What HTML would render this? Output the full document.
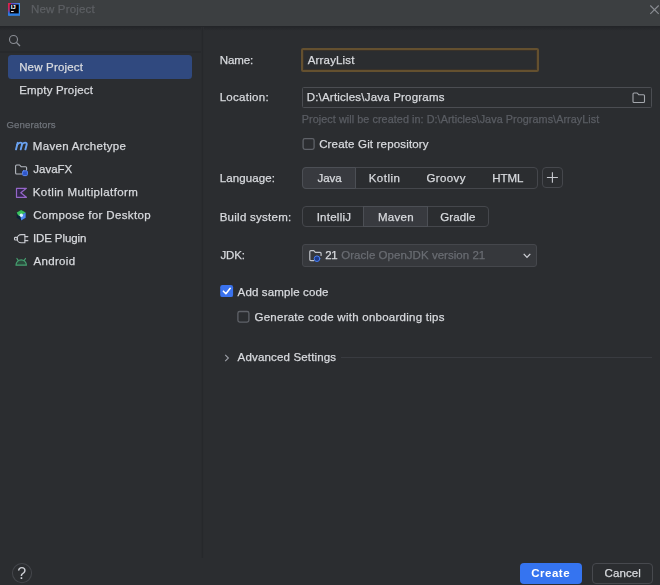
<!DOCTYPE html>
<html><head><meta charset="utf-8">
<style>
*{box-sizing:border-box;margin:0;padding:0}
html,body{width:660px;height:585px;overflow:hidden;background:#2b2d30;font-family:"Liberation Sans",sans-serif;font-size:12px;color:#dfe1e5}
.abs{position:absolute}
.t{position:absolute;white-space:pre;line-height:16px;-webkit-text-stroke:0.25px}
#title{left:0;top:0;width:660px;height:26px;background:#3c3f41}
.cb{position:absolute;width:12px;height:12px;border:1px solid #6a6d74;border-radius:2px;background:#2b2d30}
.seg{position:absolute;border:1px solid #45474c;border-radius:4px}
.sel{position:absolute;background:#383a3f;border:1px solid #4c4f55;border-radius:4px 0 0 4px}
</style></head><body>
<div id="title" class="abs">
  <svg class="abs" style="left:8px;top:3px" width="12.4" height="12.6" viewBox="0 0 12.2 12.8" preserveAspectRatio="none">
    <defs><linearGradient id="g1" x1="0" y1="0" x2="0" y2="1"><stop offset="0" stop-color="#e8203c"/><stop offset="0.5" stop-color="#c02a70"/><stop offset="0.8" stop-color="#2a6fe0"/><stop offset="1" stop-color="#2a7de8"/></linearGradient>
    <linearGradient id="g2" x1="0" y1="0" x2="1" y2="0"><stop offset="0" stop-color="#7a2bb0"/><stop offset="1" stop-color="#3a8ff0"/></linearGradient></defs>
    <rect width="12.2" height="12.8" rx="0.8" fill="#3a9cf2"/>
    <rect width="12.2" height="2" rx="0.8" fill="url(#g2)"/>
    <rect width="3" height="12.8" rx="0.8" fill="url(#g1)"/>
    <rect x="0" y="10.4" width="12.2" height="2.4" rx="0.8" fill="#2a7de8"/>
    <rect x="1.8" y="1.5" width="8.8" height="9.1" fill="#050208"/>
    <rect x="3" y="8.2" width="2.6" height="0.9" fill="#fff"/>
    <text x="2.7" y="6.6" font-family="Liberation Sans, sans-serif" font-weight="bold" font-size="6.2" fill="#fff" letter-spacing="-0.2">IJ</text>
  </svg>
  <svg class="abs" style="left:0;top:0" width="660" height="26" viewBox="0 0 660 26"><path d="M650.3 5.5L658.7 13.9M658.7 5.5L650.3 13.9" stroke="#8a8d93" stroke-width="1.1" fill="none"/></svg>
</div>
<div class="abs" style="left:0;top:26px;width:660px;height:5px;background:linear-gradient(#222427,#26282b 40%,#2b2d30)"></div>
<div class="abs" style="left:0;top:51px;width:201px;height:2px;background:#27292c"></div>
<div class="abs" style="left:201px;top:27px;width:1px;height:531px;background:#292b2e"></div><div class="abs" style="left:202px;top:27px;width:1px;height:531px;background:#26282b"></div><div class="abs" style="left:203px;top:27px;width:1px;height:531px;background:#2a2c2f"></div>

<!-- search -->
<svg class="abs" style="left:8px;top:33.5px" width="14" height="14" viewBox="0 0 14 14"><circle cx="5.5" cy="5.5" r="4" stroke="#8a8d94" stroke-width="1.1" fill="none"/><path d="M8.5 8.5L12 12" stroke="#8a8d94" stroke-width="1.2"/></svg>

<div class="abs" style="left:7.5px;top:55px;width:184.5px;height:23.5px;background:#30497f;border-radius:3.5px"></div>

<!-- form shapes -->
<div class="abs" style="left:301px;top:48px;width:237.5px;height:24px;border:2px solid #64502f;border-radius:2px;box-shadow:inset 0 0 0 1px #3a3229"></div>
<div class="abs" style="left:302px;top:87px;width:350px;height:21px;border:1px solid #4b4d52;border-radius:1.5px"></div>


<div class="seg" style="left:302px;top:167px;width:236px;height:22px"></div>
<div class="sel" style="left:302px;top:167px;width:54px;height:22px"></div>
<div class="seg" style="left:542px;top:167px;width:21px;height:21px"></div>
<svg class="abs" style="left:546px;top:171px" width="13" height="13" viewBox="0 0 13 13"><path d="M6.4 1.2v10.6M0.9 6.5h11" stroke="#c8cad0" stroke-width="1.1"/></svg>

<div class="seg" style="left:302px;top:206px;width:187px;height:21px"></div>
<div class="sel" style="left:363px;top:206px;width:65px;height:21px;border-radius:0"></div>

<div class="abs" style="left:302px;top:244px;width:235px;height:23px;border:1px solid #45474c;border-radius:3px;background:#36383c"></div>
<svg class="abs" style="left:523px;top:253px" width="8" height="6" viewBox="0 0 8 6"><path d="M0.7 0.8L4 4.3L7.3 0.8" stroke="#ced0d6" stroke-width="1.2" fill="none"/></svg>


<svg class="abs" style="left:224px;top:354px" width="6" height="8" viewBox="0 0 6 8"><path d="M1.2 0.8L4.4 4L1.2 7.2" stroke="#9da0a8" stroke-width="1.1" fill="none"/></svg>
<div class="abs" style="left:341px;top:357px;width:311px;height:1px;background:#393b40"></div>

<!-- bottom -->
<div class="abs" style="left:520px;top:563px;width:61.5px;height:21px;background:#3574f0;border-radius:4px"></div>
<div class="abs" style="left:591.5px;top:563px;width:61.5px;height:21px;border:1px solid #47494e;border-radius:4px"></div>

<!-- icons -->
<svg class="abs" style="left:0;top:0" width="660" height="585" viewBox="0 0 660 585" fill="none" stroke-linecap="round" stroke-linejoin="round">
  <!-- maven m -->
  <g stroke="#6aa2f0" stroke-width="1.9">
    <path d="M16 149.4L17.7 142.8"/>
    <path d="M17.3 144.6C18.6 142.2 22.6 141.8 22 144.6L20.7 149.4"/>
    <path d="M21.9 144.6C23.2 142.2 27.4 141.8 26.7 144.6L25.4 149.4"/>
  </g>
  <!-- javafx folder -->
  <path d="M21.6 174H16.6a1 1 0 0 1-1-1V166a1 1 0 0 1 1-1h3l1.5 1.7h4.5a1 1 0 0 1 1 1v2.4" stroke="#b4b8bf" stroke-width="1.1"/>
  <rect x="22.6" y="170.8" width="4.8" height="4.8" rx="1" fill="#2f55c8" stroke="#5a88f2" stroke-width="1"/>
  <!-- kotlin -->
  <path d="M16.5 188.3H26.4L20.8 192.8L26.4 197.3H16.5Z" fill="#30254a" stroke="#9566c8" stroke-width="1.2"/>
  <!-- compose -->
  <g stroke="none">
    <path d="M21.2 210L25.7 212.6V217.8L21.2 220.4L16.7 217.8V212.6Z" fill="#0b2238"/>
    <path d="M16.7 212.6L21.2 210L25.7 212.6L21.2 215.2L18.2 215.4Z" fill="#3ac35c"/>
    <path d="M25.7 212.6V217.8L21.2 220.4L20.6 217.2L22.6 214.2Z" fill="#4f86ee"/>
    <circle cx="21.3" cy="215.2" r="1.7" fill="#d8f4ff"/>
  </g>
  <!-- plugin -->
  <g stroke="#c8cad0" stroke-width="1.1">
    <path d="M24.9 234.6H21.2a4.1 4.1 0 0 0 0 8.2H24.9Z"/>
    <rect x="14.5" y="237.4" width="3" height="2.6" rx="0.8"/>
    <path d="M25 236.6H27.8M25 240.7H27.8" stroke-width="1.3"/>
  </g>
  <!-- android -->
  <g stroke="#46a070" stroke-width="1.2">
    <path d="M16 265.2a5.2 5.4 0 0 1 10.4 0Z" fill="#2a4a3c"/>
    <path d="M18.2 260.4L16.9 258.5M24.2 260.4L25.5 258.5"/>
  </g>
  <circle cx="22" cy="573.1" r="9.6" stroke="#43454a" stroke-width="1.1"/>
  <!-- checkboxes -->
  <rect x="303.1" y="138.7" width="11" height="10.6" rx="1.8" stroke="#5f6268" stroke-width="1.3"/>
  <rect x="237.9" y="311.5" width="11" height="10.6" rx="1.8" stroke="#5f6268" stroke-width="1.3"/>
  <rect x="220.2" y="285.1" width="12.9" height="12" rx="2.2" fill="#3a72ee" stroke="none"/>
  <path d="M223.4 291.2L225.9 293.7L230.2 288.3" stroke="#fff" stroke-width="1.6"/>
  <!-- location folder -->
  <path d="M633 94a1 1 0 0 1 1-1h3.2l1.5 1.7h4.8a1 1 0 0 1 1 1v5.8a1 1 0 0 1-1 1h-9.5a1 1 0 0 1-1-1Z" stroke="#a4a7ad" stroke-width="1.1"/>
  <!-- jdk folder -->
  <path d="M314 260.6H310.8a1 1 0 0 1-1-1V251.7a1 1 0 0 1 1-1h3l1.5 1.7h4.8a1 1 0 0 1 1 1v2" stroke="#c0c3c9" stroke-width="1.2"/>
  <circle cx="317" cy="258.7" r="2.8" fill="#1d3a8a" stroke="#4a80f0" stroke-width="1"/>
</svg>
<div class="abs" style="left:0;top:0;width:660px;height:585px;will-change:transform">
<div class="t" id="ttl" style="left:31.03px;top:1.28px;font-size:11.5px;letter-spacing:0.160px;color:#5c5f63;">New Project</div>
<div class="t" id="np" style="left:19.15px;top:58.98px;font-size:11.5px;letter-spacing:0.175px;color:#d8dade;">New Project</div>
<div class="t" id="ep" style="left:19.15px;top:82.28px;font-size:11.5px;letter-spacing:0.181px;color:#d8dade;">Empty Project</div>
<div class="t" id="gen" style="left:6.45px;top:117.14px;font-size:9.6px;letter-spacing:0.131px;color:#6f737a;">Generators</div>
<div class="t" id="i1" style="left:32.83px;top:138.47px;font-size:11.5px;letter-spacing:0.299px;color:#d8dade;">Maven Archetype</div>
<div class="t" id="i2" style="left:33.31px;top:161.47px;font-size:11.5px;letter-spacing:-0.005px;color:#d8dade;">JavaFX</div>
<div class="t" id="i3" style="left:32.83px;top:184.47px;font-size:11.5px;letter-spacing:0.376px;color:#d8dade;">Kotlin Multiplatform</div>
<div class="t" id="i4" style="left:33.13px;top:207.47px;font-size:11.5px;letter-spacing:0.346px;color:#d8dade;">Compose for Desktop</div>
<div class="t" id="i5" style="left:32.95px;top:230.47px;font-size:11.5px;letter-spacing:-0.108px;color:#d8dade;">IDE Plugin</div>
<div class="t" id="i6" style="left:33.48px;top:253.47px;font-size:11.5px;letter-spacing:0.330px;color:#d8dade;">Android</div>
<div class="t" id="l1" style="left:219.83px;top:51.73px;font-size:11.5px;letter-spacing:-0.107px;color:#d8dade;">Name:</div>
<div class="t" id="v1" style="left:307.81px;top:51.73px;font-size:11.5px;letter-spacing:0.152px;color:#d8dade;">ArrayList</div>
<div class="t" id="l2" style="left:219.69px;top:89.22px;font-size:11.5px;letter-spacing:0.283px;color:#d8dade;">Location:</div>
<div class="t" id="v2" style="left:306.69px;top:89.22px;font-size:11.5px;letter-spacing:0.203px;color:#d8dade;">D:\Articles\Java Programs</div>
<div class="t" id="hint" style="left:301.85px;top:111.22px;font-size:10.8px;letter-spacing:0.065px;color:#5a5d63;">Project will be created in: D:\Articles\Java Programs\ArrayList</div>
<div class="t" id="git" style="left:319.15px;top:136.22px;font-size:11.5px;letter-spacing:0.169px;color:#d8dade;">Create Git repository</div>
<div class="t" id="l3" style="left:219.69px;top:170.47px;font-size:11.5px;letter-spacing:0.110px;color:#d8dade;">Language:</div>
<div class="t" id="s1" style="left:317.44px;top:170.47px;font-size:11.5px;letter-spacing:0.007px;color:#d8dade;">Java</div>
<div class="t" id="s2" style="left:368.69px;top:170.47px;font-size:11.5px;letter-spacing:0.498px;color:#d8dade;">Kotlin</div>
<div class="t" id="s3" style="left:426.47px;top:170.47px;font-size:11.5px;letter-spacing:0.375px;color:#d8dade;">Groovy</div>
<div class="t" id="s4" style="left:492.15px;top:170.47px;font-size:11.5px;letter-spacing:0.020px;color:#d8dade;">HTML</div>
<div class="t" id="l4" style="left:219.69px;top:208.72px;font-size:11.5px;letter-spacing:0.262px;color:#d8dade;">Build system:</div>
<div class="t" id="b1" style="left:316.68px;top:208.72px;font-size:11.5px;letter-spacing:0.254px;color:#d8dade;">IntelliJ</div>
<div class="t" id="b2" style="left:378.03px;top:208.72px;font-size:11.5px;letter-spacing:0.275px;color:#d8dade;">Maven</div>
<div class="t" id="b3" style="left:440.13px;top:208.72px;font-size:11.5px;letter-spacing:0.165px;color:#d8dade;">Gradle</div>
<div class="t" id="l5" style="left:220.44px;top:246.72px;font-size:11.5px;letter-spacing:-0.140px;color:#d8dade;">JDK:</div>
<div class="t" id="j1" style="left:325.23px;top:246.72px;font-size:11.5px;letter-spacing:-0.400px;color:#d8dade;">21</div>
<div class="t" id="j2" style="left:341.27px;top:246.72px;font-size:11.5px;letter-spacing:0.034px;color:#696c72;">Oracle OpenJDK version 21</div>
<div class="t" id="c1" style="left:237.61px;top:284.23px;font-size:11.5px;letter-spacing:0.139px;color:#d8dade;">Add sample code</div>
<div class="t" id="c2" style="left:254.47px;top:308.73px;font-size:11.5px;letter-spacing:0.256px;color:#d8dade;">Generate code with onboarding tips</div>
<div class="t" id="adv" style="left:237.61px;top:348.73px;font-size:11.5px;letter-spacing:0.162px;color:#d8dade;">Advanced Settings</div>
<div class="t" id="create" style="left:531.25px;top:565.48px;font-size:11.5px;letter-spacing:0.500px;color:#ffffff;font-weight:bold;-webkit-text-stroke:0">Create</div>
<div class="t" id="cancel" style="left:604.47px;top:565.48px;font-size:11.5px;letter-spacing:0.132px;color:#d8dade;">Cancel</div>
<div class="t" id="help" style="left:17.20px;top:565.60px;font-size:16px;letter-spacing:0.000px;color:#ced0d6;-webkit-text-stroke:0">?</div>
</div>
</body></html>
